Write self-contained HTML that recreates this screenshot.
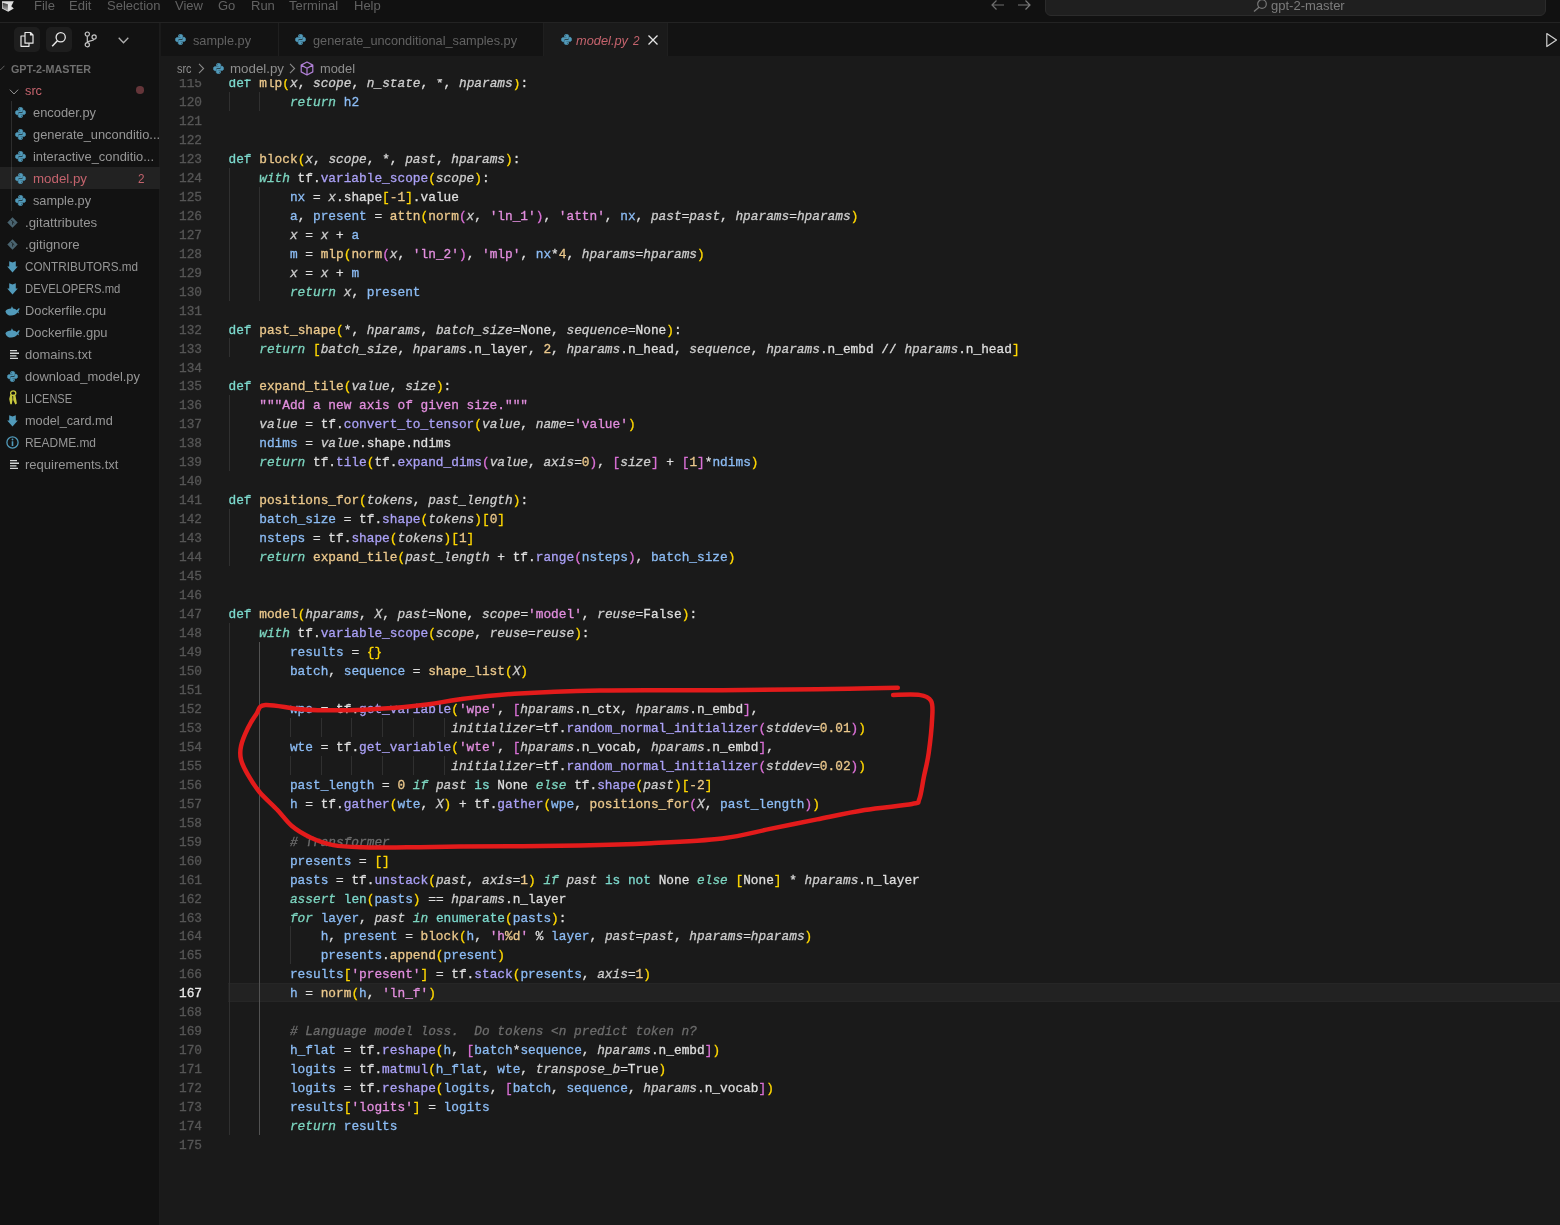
<!DOCTYPE html>
<html><head><meta charset="utf-8">
<style>
*{margin:0;padding:0;box-sizing:border-box}
html,body{width:1560px;height:1225px;overflow:hidden;background:#1a1a1a;font-family:"Liberation Sans",sans-serif}
.abs{position:absolute}
#title{position:absolute;left:0;top:0;width:1560px;height:23px;background:#111111;border-bottom:1px solid #232323}
.menu{position:absolute;top:-2.5px;font-size:13px;color:#626262;white-space:nowrap}
#search{position:absolute;left:1045px;top:-8px;width:501px;height:24px;background:#1f1f1f;border:1px solid #2b2b2b;border-radius:6px}
#side{position:absolute;left:0;top:23px;width:160px;height:1202px;background:#121212;border-right:1px solid #1c1c1c}
.row{position:absolute;left:0;width:159px;height:22px;font-size:13px;color:#a8a8a8;white-space:nowrap}
.row span.t{position:absolute;top:3px}
.row svg{position:absolute}
#tabs{position:absolute;left:161px;top:23px;width:1399px;height:33px;background:#131313}
.tab{position:absolute;top:0;height:33px;background:#131313;border-right:1px solid #1e1e1e;font-size:13px;color:#7a7a7a;white-space:nowrap}
.tab span{position:absolute;top:9px}
#crumbs{position:absolute;left:161px;top:56px;width:1399px;height:23px;background:#1a1a1a;font-size:13px;color:#9a9a9a;white-space:nowrap;z-index:5}
#editor{position:absolute;left:161px;top:56px;width:1399px;height:1169px;background:#1a1a1a;overflow:hidden}
.ln{position:absolute;left:0;width:202px;text-align:right;font-family:"Liberation Mono",monospace;font-size:12.8px;line-height:19px;height:19px;color:#565656;-webkit-text-stroke:0.3px currentColor}
.ln.cur{color:#e8e8e8;-webkit-text-stroke:0.3px currentColor}
.cl{position:absolute;left:228.5px;font-family:"Liberation Mono",monospace;font-size:12.8px;line-height:19px;height:19px;color:#dedede;white-space:pre;-webkit-text-stroke:0.3px currentColor}
.cl i{font-style:normal}
.cl i.ki,.cl i.p,.cl i.c{font-style:italic}
.cl i.k{color:#7cd8cc}
.cl i.ki{color:#7cd4bf}
.cl i.f{color:#ebc88c}
.cl i.m{color:#aaa0f5}
.cl i.v{color:#8cbcf4}
.cl i.s{color:#e28ede}
.cl i.n{color:#ebc88c}
.cl i.p{color:#cdcdcd}
.cl i.c{color:#6c6c6c}
.cl i.b1{color:#ffd700}
.cl i.b2{color:#da70d6}
.cl i.b3{color:#179fff}
.g{position:absolute;width:1px;height:19px;background:#303030}
.g.ga{background:#525252}
#curline{position:absolute;left:228px;width:1332px;height:19px;background:#222222;border-top:1px solid #262626;border-bottom:1px solid #262626}
#code{position:absolute;left:0;top:0;width:1560px;height:1225px}
</style></head><body><div id="wrap" style="position:absolute;left:0;top:0;width:1560px;height:1225px;overflow:hidden;will-change:transform">
<div id="code">
<div id="curline" style="top:983.36px"></div>
<div class="g" style="top:91.90px;left:228.50px"></div>
<div class="g" style="top:91.90px;left:259.22px"></div>
<div class="g" style="top:167.76px;left:228.50px"></div>
<div class="g" style="top:186.72px;left:228.50px"></div>
<div class="g" style="top:186.72px;left:259.22px"></div>
<div class="g" style="top:205.69px;left:228.50px"></div>
<div class="g" style="top:205.69px;left:259.22px"></div>
<div class="g" style="top:224.66px;left:228.50px"></div>
<div class="g" style="top:224.66px;left:259.22px"></div>
<div class="g" style="top:243.62px;left:228.50px"></div>
<div class="g" style="top:243.62px;left:259.22px"></div>
<div class="g" style="top:262.58px;left:228.50px"></div>
<div class="g" style="top:262.58px;left:259.22px"></div>
<div class="g" style="top:281.55px;left:228.50px"></div>
<div class="g" style="top:281.55px;left:259.22px"></div>
<div class="g" style="top:338.44px;left:228.50px"></div>
<div class="g" style="top:395.34px;left:228.50px"></div>
<div class="g" style="top:414.30px;left:228.50px"></div>
<div class="g" style="top:433.27px;left:228.50px"></div>
<div class="g" style="top:452.23px;left:228.50px"></div>
<div class="g" style="top:509.13px;left:228.50px"></div>
<div class="g" style="top:528.09px;left:228.50px"></div>
<div class="g" style="top:547.06px;left:228.50px"></div>
<div class="g" style="top:622.92px;left:228.50px"></div>
<div class="g" style="top:641.88px;left:228.50px"></div>
<div class="g ga" style="top:641.88px;left:259.22px"></div>
<div class="g" style="top:660.85px;left:228.50px"></div>
<div class="g ga" style="top:660.85px;left:259.22px"></div>
<div class="g" style="top:679.81px;left:228.50px"></div>
<div class="g ga" style="top:679.81px;left:259.22px"></div>
<div class="g" style="top:698.78px;left:228.50px"></div>
<div class="g ga" style="top:698.78px;left:259.22px"></div>
<div class="g" style="top:717.75px;left:228.50px"></div>
<div class="g ga" style="top:717.75px;left:259.22px"></div>
<div class="g" style="top:717.75px;left:289.94px"></div>
<div class="g" style="top:717.75px;left:320.66px"></div>
<div class="g" style="top:717.75px;left:351.38px"></div>
<div class="g" style="top:717.75px;left:382.10px"></div>
<div class="g" style="top:717.75px;left:412.82px"></div>
<div class="g" style="top:717.75px;left:443.54px"></div>
<div class="g" style="top:736.71px;left:228.50px"></div>
<div class="g ga" style="top:736.71px;left:259.22px"></div>
<div class="g" style="top:755.67px;left:228.50px"></div>
<div class="g ga" style="top:755.67px;left:259.22px"></div>
<div class="g" style="top:755.67px;left:289.94px"></div>
<div class="g" style="top:755.67px;left:320.66px"></div>
<div class="g" style="top:755.67px;left:351.38px"></div>
<div class="g" style="top:755.67px;left:382.10px"></div>
<div class="g" style="top:755.67px;left:412.82px"></div>
<div class="g" style="top:755.67px;left:443.54px"></div>
<div class="g" style="top:774.64px;left:228.50px"></div>
<div class="g ga" style="top:774.64px;left:259.22px"></div>
<div class="g" style="top:793.61px;left:228.50px"></div>
<div class="g ga" style="top:793.61px;left:259.22px"></div>
<div class="g" style="top:812.57px;left:228.50px"></div>
<div class="g ga" style="top:812.57px;left:259.22px"></div>
<div class="g" style="top:831.53px;left:228.50px"></div>
<div class="g ga" style="top:831.53px;left:259.22px"></div>
<div class="g" style="top:850.50px;left:228.50px"></div>
<div class="g ga" style="top:850.50px;left:259.22px"></div>
<div class="g" style="top:869.46px;left:228.50px"></div>
<div class="g ga" style="top:869.46px;left:259.22px"></div>
<div class="g" style="top:888.43px;left:228.50px"></div>
<div class="g ga" style="top:888.43px;left:259.22px"></div>
<div class="g" style="top:907.39px;left:228.50px"></div>
<div class="g ga" style="top:907.39px;left:259.22px"></div>
<div class="g" style="top:926.36px;left:228.50px"></div>
<div class="g ga" style="top:926.36px;left:259.22px"></div>
<div class="g" style="top:926.36px;left:289.94px"></div>
<div class="g" style="top:945.32px;left:228.50px"></div>
<div class="g ga" style="top:945.32px;left:259.22px"></div>
<div class="g" style="top:945.32px;left:289.94px"></div>
<div class="g" style="top:964.29px;left:228.50px"></div>
<div class="g ga" style="top:964.29px;left:259.22px"></div>
<div class="g" style="top:983.25px;left:228.50px"></div>
<div class="g ga" style="top:983.25px;left:259.22px"></div>
<div class="g" style="top:1002.22px;left:228.50px"></div>
<div class="g ga" style="top:1002.22px;left:259.22px"></div>
<div class="g" style="top:1021.18px;left:228.50px"></div>
<div class="g ga" style="top:1021.18px;left:259.22px"></div>
<div class="g" style="top:1040.15px;left:228.50px"></div>
<div class="g ga" style="top:1040.15px;left:259.22px"></div>
<div class="g" style="top:1059.12px;left:228.50px"></div>
<div class="g ga" style="top:1059.12px;left:259.22px"></div>
<div class="g" style="top:1078.08px;left:228.50px"></div>
<div class="g ga" style="top:1078.08px;left:259.22px"></div>
<div class="g" style="top:1097.05px;left:228.50px"></div>
<div class="g ga" style="top:1097.05px;left:259.22px"></div>
<div class="g" style="top:1116.01px;left:228.50px"></div>
<div class="g ga" style="top:1116.01px;left:259.22px"></div>
<div class="ln" style="top:74.03px">115</div>
<div class="ln" style="top:93.00px">120</div>
<div class="ln" style="top:111.97px">121</div>
<div class="ln" style="top:130.93px">122</div>
<div class="ln" style="top:149.89px">123</div>
<div class="ln" style="top:168.86px">124</div>
<div class="ln" style="top:187.82px">125</div>
<div class="ln" style="top:206.79px">126</div>
<div class="ln" style="top:225.75px">127</div>
<div class="ln" style="top:244.72px">128</div>
<div class="ln" style="top:263.69px">129</div>
<div class="ln" style="top:282.65px">130</div>
<div class="ln" style="top:301.62px">131</div>
<div class="ln" style="top:320.58px">132</div>
<div class="ln" style="top:339.54px">133</div>
<div class="ln" style="top:358.51px">134</div>
<div class="ln" style="top:377.48px">135</div>
<div class="ln" style="top:396.44px">136</div>
<div class="ln" style="top:415.40px">137</div>
<div class="ln" style="top:434.37px">138</div>
<div class="ln" style="top:453.33px">139</div>
<div class="ln" style="top:472.30px">140</div>
<div class="ln" style="top:491.26px">141</div>
<div class="ln" style="top:510.23px">142</div>
<div class="ln" style="top:529.19px">143</div>
<div class="ln" style="top:548.16px">144</div>
<div class="ln" style="top:567.12px">145</div>
<div class="ln" style="top:586.09px">146</div>
<div class="ln" style="top:605.05px">147</div>
<div class="ln" style="top:624.02px">148</div>
<div class="ln" style="top:642.99px">149</div>
<div class="ln" style="top:661.95px">150</div>
<div class="ln" style="top:680.91px">151</div>
<div class="ln" style="top:699.88px">152</div>
<div class="ln" style="top:718.85px">153</div>
<div class="ln" style="top:737.81px">154</div>
<div class="ln" style="top:756.77px">155</div>
<div class="ln" style="top:775.74px">156</div>
<div class="ln" style="top:794.71px">157</div>
<div class="ln" style="top:813.67px">158</div>
<div class="ln" style="top:832.63px">159</div>
<div class="ln" style="top:851.60px">160</div>
<div class="ln" style="top:870.56px">161</div>
<div class="ln" style="top:889.53px">162</div>
<div class="ln" style="top:908.50px">163</div>
<div class="ln" style="top:927.46px">164</div>
<div class="ln" style="top:946.42px">165</div>
<div class="ln" style="top:965.39px">166</div>
<div class="ln cur" style="top:984.36px">167</div>
<div class="ln" style="top:1003.32px">168</div>
<div class="ln" style="top:1022.28px">169</div>
<div class="ln" style="top:1041.25px">170</div>
<div class="ln" style="top:1060.22px">171</div>
<div class="ln" style="top:1079.18px">172</div>
<div class="ln" style="top:1098.14px">173</div>
<div class="ln" style="top:1117.11px">174</div>
<div class="ln" style="top:1136.08px">175</div>
<div class="cl" style="top:74.03px"><i class="k">def</i> <i class="f">mlp</i><i class="b1">(</i><i class="p">x</i>, <i class="p">scope</i>, <i class="p">n_state</i>, *, <i class="p">hparams</i><i class="b1">)</i>:</div>
<div class="cl" style="top:93.00px">        <i class="ki">return</i> <i class="v">h2</i></div>
<div class="cl" style="top:111.97px"></div>
<div class="cl" style="top:130.93px"></div>
<div class="cl" style="top:149.89px"><i class="k">def</i> <i class="f">block</i><i class="b1">(</i><i class="p">x</i>, <i class="p">scope</i>, *, <i class="p">past</i>, <i class="p">hparams</i><i class="b1">)</i>:</div>
<div class="cl" style="top:168.86px">    <i class="ki">with</i> tf.<i class="m">variable_scope</i><i class="b1">(</i><i class="p">scope</i><i class="b1">)</i>:</div>
<div class="cl" style="top:187.82px">        <i class="v">nx</i> = <i class="p">x</i>.shape<i class="b1">[</i><i class="n">-1</i><i class="b1">]</i>.value</div>
<div class="cl" style="top:206.79px">        <i class="v">a</i>, <i class="v">present</i> = <i class="f">attn</i><i class="b1">(</i><i class="f">norm</i><i class="b2">(</i><i class="p">x</i>, <i class="s">&#x27;ln_1&#x27;</i><i class="b2">)</i>, <i class="s">&#x27;attn&#x27;</i>, <i class="v">nx</i>, <i class="p">past</i>=<i class="p">past</i>, <i class="p">hparams</i>=<i class="p">hparams</i><i class="b1">)</i></div>
<div class="cl" style="top:225.75px">        <i class="p">x</i> = <i class="p">x</i> + <i class="v">a</i></div>
<div class="cl" style="top:244.72px">        <i class="v">m</i> = <i class="f">mlp</i><i class="b1">(</i><i class="f">norm</i><i class="b2">(</i><i class="p">x</i>, <i class="s">&#x27;ln_2&#x27;</i><i class="b2">)</i>, <i class="s">&#x27;mlp&#x27;</i>, <i class="v">nx</i>*<i class="n">4</i>, <i class="p">hparams</i>=<i class="p">hparams</i><i class="b1">)</i></div>
<div class="cl" style="top:263.69px">        <i class="p">x</i> = <i class="p">x</i> + <i class="v">m</i></div>
<div class="cl" style="top:282.65px">        <i class="ki">return</i> <i class="p">x</i>, <i class="v">present</i></div>
<div class="cl" style="top:301.62px"></div>
<div class="cl" style="top:320.58px"><i class="k">def</i> <i class="f">past_shape</i><i class="b1">(</i>*, <i class="p">hparams</i>, <i class="p">batch_size</i>=None, <i class="p">sequence</i>=None<i class="b1">)</i>:</div>
<div class="cl" style="top:339.54px">    <i class="ki">return</i> <i class="b1">[</i><i class="p">batch_size</i>, <i class="p">hparams</i>.n_layer, <i class="n">2</i>, <i class="p">hparams</i>.n_head, <i class="p">sequence</i>, <i class="p">hparams</i>.n_embd // <i class="p">hparams</i>.n_head<i class="b1">]</i></div>
<div class="cl" style="top:358.51px"></div>
<div class="cl" style="top:377.48px"><i class="k">def</i> <i class="f">expand_tile</i><i class="b1">(</i><i class="p">value</i>, <i class="p">size</i><i class="b1">)</i>:</div>
<div class="cl" style="top:396.44px">    <i class="s">&quot;&quot;&quot;Add a new axis of given size.&quot;&quot;&quot;</i></div>
<div class="cl" style="top:415.40px">    <i class="p">value</i> = tf.<i class="m">convert_to_tensor</i><i class="b1">(</i><i class="p">value</i>, <i class="p">name</i>=<i class="s">&#x27;value&#x27;</i><i class="b1">)</i></div>
<div class="cl" style="top:434.37px">    <i class="v">ndims</i> = <i class="p">value</i>.shape.ndims</div>
<div class="cl" style="top:453.33px">    <i class="ki">return</i> tf.<i class="m">tile</i><i class="b1">(</i>tf.<i class="m">expand_dims</i><i class="b2">(</i><i class="p">value</i>, <i class="p">axis</i>=<i class="n">0</i><i class="b2">)</i>, <i class="b2">[</i><i class="p">size</i><i class="b2">]</i> + <i class="b2">[</i><i class="n">1</i><i class="b2">]</i>*<i class="v">ndims</i><i class="b1">)</i></div>
<div class="cl" style="top:472.30px"></div>
<div class="cl" style="top:491.26px"><i class="k">def</i> <i class="f">positions_for</i><i class="b1">(</i><i class="p">tokens</i>, <i class="p">past_length</i><i class="b1">)</i>:</div>
<div class="cl" style="top:510.23px">    <i class="v">batch_size</i> = tf.<i class="m">shape</i><i class="b1">(</i><i class="p">tokens</i><i class="b1">)</i><i class="b1">[</i><i class="n">0</i><i class="b1">]</i></div>
<div class="cl" style="top:529.19px">    <i class="v">nsteps</i> = tf.<i class="m">shape</i><i class="b1">(</i><i class="p">tokens</i><i class="b1">)</i><i class="b1">[</i><i class="n">1</i><i class="b1">]</i></div>
<div class="cl" style="top:548.16px">    <i class="ki">return</i> <i class="f">expand_tile</i><i class="b1">(</i><i class="p">past_length</i> + tf.<i class="m">range</i><i class="b2">(</i><i class="v">nsteps</i><i class="b2">)</i>, <i class="v">batch_size</i><i class="b1">)</i></div>
<div class="cl" style="top:567.12px"></div>
<div class="cl" style="top:586.09px"></div>
<div class="cl" style="top:605.05px"><i class="k">def</i> <i class="f">model</i><i class="b1">(</i><i class="p">hparams</i>, <i class="p">X</i>, <i class="p">past</i>=None, <i class="p">scope</i>=<i class="s">&#x27;model&#x27;</i>, <i class="p">reuse</i>=False<i class="b1">)</i>:</div>
<div class="cl" style="top:624.02px">    <i class="ki">with</i> tf.<i class="m">variable_scope</i><i class="b1">(</i><i class="p">scope</i>, <i class="p">reuse</i>=<i class="p">reuse</i><i class="b1">)</i>:</div>
<div class="cl" style="top:642.99px">        <i class="v">results</i> = <i class="b1">{}</i></div>
<div class="cl" style="top:661.95px">        <i class="v">batch</i>, <i class="v">sequence</i> = <i class="f">shape_list</i><i class="b1">(</i><i class="p">X</i><i class="b1">)</i></div>
<div class="cl" style="top:680.91px"></div>
<div class="cl" style="top:699.88px">        <i class="v">wpe</i> = tf.<i class="m">get_variable</i><i class="b1">(</i><i class="s">&#x27;wpe&#x27;</i>, <i class="b2">[</i><i class="p">hparams</i>.n_ctx, <i class="p">hparams</i>.n_embd<i class="b2">]</i>,</div>
<div class="cl" style="top:718.85px">                             <i class="p">initializer</i>=tf.<i class="m">random_normal_initializer</i><i class="b2">(</i><i class="p">stddev</i>=<i class="n">0.01</i><i class="b2">)</i><i class="b1">)</i></div>
<div class="cl" style="top:737.81px">        <i class="v">wte</i> = tf.<i class="m">get_variable</i><i class="b1">(</i><i class="s">&#x27;wte&#x27;</i>, <i class="b2">[</i><i class="p">hparams</i>.n_vocab, <i class="p">hparams</i>.n_embd<i class="b2">]</i>,</div>
<div class="cl" style="top:756.77px">                             <i class="p">initializer</i>=tf.<i class="m">random_normal_initializer</i><i class="b2">(</i><i class="p">stddev</i>=<i class="n">0.02</i><i class="b2">)</i><i class="b1">)</i></div>
<div class="cl" style="top:775.74px">        <i class="v">past_length</i> = <i class="n">0</i> <i class="ki">if</i> <i class="p">past</i> <i class="k">is</i> None <i class="ki">else</i> tf.<i class="m">shape</i><i class="b1">(</i><i class="p">past</i><i class="b1">)</i><i class="b1">[</i><i class="n">-2</i><i class="b1">]</i></div>
<div class="cl" style="top:794.71px">        <i class="v">h</i> = tf.<i class="m">gather</i><i class="b1">(</i><i class="v">wte</i>, <i class="p">X</i><i class="b1">)</i> + tf.<i class="m">gather</i><i class="b1">(</i><i class="v">wpe</i>, <i class="f">positions_for</i><i class="b2">(</i><i class="p">X</i>, <i class="v">past_length</i><i class="b2">)</i><i class="b1">)</i></div>
<div class="cl" style="top:813.67px"></div>
<div class="cl" style="top:832.63px">        <i class="c"># Transformer</i></div>
<div class="cl" style="top:851.60px">        <i class="v">presents</i> = <i class="b1">[]</i></div>
<div class="cl" style="top:870.56px">        <i class="v">pasts</i> = tf.<i class="m">unstack</i><i class="b1">(</i><i class="p">past</i>, <i class="p">axis</i>=<i class="n">1</i><i class="b1">)</i> <i class="ki">if</i> <i class="p">past</i> <i class="k">is</i> <i class="k">not</i> None <i class="ki">else</i> <i class="b1">[</i>None<i class="b1">]</i> * <i class="p">hparams</i>.n_layer</div>
<div class="cl" style="top:889.53px">        <i class="ki">assert</i> <i class="k">len</i><i class="b1">(</i><i class="v">pasts</i><i class="b1">)</i> == <i class="p">hparams</i>.n_layer</div>
<div class="cl" style="top:908.50px">        <i class="ki">for</i> <i class="v">layer</i>, <i class="p">past</i> <i class="ki">in</i> <i class="k">enumerate</i><i class="b1">(</i><i class="v">pasts</i><i class="b1">)</i>:</div>
<div class="cl" style="top:927.46px">            <i class="v">h</i>, <i class="v">present</i> = <i class="f">block</i><i class="b1">(</i><i class="v">h</i>, <i class="s">&#x27;h</i><i class="n">%d</i><i class="s">&#x27;</i> % <i class="v">layer</i>, <i class="p">past</i>=<i class="p">past</i>, <i class="p">hparams</i>=<i class="p">hparams</i><i class="b1">)</i></div>
<div class="cl" style="top:946.42px">            <i class="v">presents</i>.<i class="f">append</i><i class="b1">(</i><i class="v">present</i><i class="b1">)</i></div>
<div class="cl" style="top:965.39px">        <i class="v">results</i><i class="b1">[</i><i class="s">&#x27;present&#x27;</i><i class="b1">]</i> = tf.<i class="m">stack</i><i class="b1">(</i><i class="v">presents</i>, <i class="p">axis</i>=<i class="n">1</i><i class="b1">)</i></div>
<div class="cl" style="top:984.36px">        <i class="v">h</i> = <i class="f">norm</i><i class="b1">(</i><i class="v">h</i>, <i class="s">&#x27;ln_f&#x27;</i><i class="b1">)</i></div>
<div class="cl" style="top:1003.32px"></div>
<div class="cl" style="top:1022.28px">        <i class="c"># Language model loss.  Do tokens &lt;n predict token n?</i></div>
<div class="cl" style="top:1041.25px">        <i class="v">h_flat</i> = tf.<i class="m">reshape</i><i class="b1">(</i><i class="v">h</i>, <i class="b2">[</i><i class="v">batch</i>*<i class="v">sequence</i>, <i class="p">hparams</i>.n_embd<i class="b2">]</i><i class="b1">)</i></div>
<div class="cl" style="top:1060.22px">        <i class="v">logits</i> = tf.<i class="m">matmul</i><i class="b1">(</i><i class="v">h_flat</i>, <i class="v">wte</i>, <i class="p">transpose_b</i>=True<i class="b1">)</i></div>
<div class="cl" style="top:1079.18px">        <i class="v">logits</i> = tf.<i class="m">reshape</i><i class="b1">(</i><i class="v">logits</i>, <i class="b2">[</i><i class="v">batch</i>, <i class="v">sequence</i>, <i class="p">hparams</i>.n_vocab<i class="b2">]</i><i class="b1">)</i></div>
<div class="cl" style="top:1098.14px">        <i class="v">results</i><i class="b1">[</i><i class="s">&#x27;logits&#x27;</i><i class="b1">]</i> = <i class="v">logits</i></div>
<div class="cl" style="top:1117.11px">        <i class="ki">return</i> <i class="v">results</i></div>
<div class="cl" style="top:1136.08px"></div>
</div>

<div id="title">
  <svg class="abs" style="left:0;top:0" width="16" height="14" viewBox="0 0 16 14"><defs><linearGradient id="lg" x1="0" y1="0" x2="0" y2="1"><stop offset="0" stop-color="#3a3a3a"/><stop offset="1" stop-color="#b0b0b0"/></linearGradient></defs><path d="M2 1.3L13.8 1.2L11.3 6.2L13.8 8.4L8.2 11.8L2 8.4Z" fill="#dcdcdc"/><path d="M2.6 2.8L7.9 4.3V10.8L2.6 8Z" fill="url(#lg)"/><path d="M8 4L10.8 3.2L10.8 9.5L8 10.8Z" fill="#e6e6e6"/></svg>
  <span class="menu" style="left:34px">File</span>
  <span class="menu" style="left:69px">Edit</span>
  <span class="menu" style="left:107px">Selection</span>
  <span class="menu" style="left:175px">View</span>
  <span class="menu" style="left:218px">Go</span>
  <span class="menu" style="left:251px">Run</span>
  <span class="menu" style="left:289px">Terminal</span>
  <span class="menu" style="left:354px">Help</span>
  <svg class="abs" style="left:990px;top:0" width="44" height="12" viewBox="0 0 44 12"><path d="M14 5H2M6.5 0.5L2 5L6.5 9.5" stroke="#6e6e6e" stroke-width="1.2" fill="none"/><path d="M28 5H40M35.5 0.5L40 5L35.5 9.5" stroke="#7a7a7a" stroke-width="1.2" fill="none"/></svg>
  <div id="search"></div>
  <svg class="abs" style="left:1252px;top:0" width="16" height="12" viewBox="0 0 16 12"><circle cx="10" cy="4" r="4.3" stroke="#777" stroke-width="1.2" fill="none"/><path d="M7 7.2L2 11.5" stroke="#777" stroke-width="1.3"/></svg>
  <span class="menu" style="left:1271px;color:#7c7c7c">gpt-2-master</span>
</div>

<div id="side"></div>
<div style="position:absolute;left:0;top:0">
<div style="position:absolute;left:14px;top:27px;width:26px;height:25px;border-radius:5px;background:#1e1e1e"></div>
<div style="position:absolute;left:46px;top:27px;width:26px;height:25px;border-radius:5px;background:#1e1e1e"></div>
<svg style="position:absolute;left:19px;top:31px" width="16" height="17" viewBox="0 0 16 17"><path stroke="#e8e8e8" stroke-width="1.2" fill="none" stroke-linejoin="round" d="M6 1.5H11.5L14 4V12.2H6ZM11.5 1.5V4H14"/><path stroke="#e8e8e8" stroke-width="1.2" fill="none" stroke-linejoin="round" d="M6 5H2V15.3H10V12.2"/></svg>
<svg style="position:absolute;left:51px;top:31px" width="16" height="17" viewBox="0 0 16 17"><circle cx="9.7" cy="6.3" r="4.6" stroke="#e8e8e8" stroke-width="1.3" fill="none"/><path stroke="#e8e8e8" stroke-width="1.5" d="M6.4 9.7L1.2 15.2"/></svg>
<svg style="position:absolute;left:83px;top:31px" width="16" height="17" viewBox="0 0 16 17"><circle cx="4.3" cy="3.1" r="2.1" stroke="#c4c4c4" stroke-width="1.2" fill="none"/><circle cx="4.3" cy="13.7" r="2.1" stroke="#c4c4c4" stroke-width="1.2" fill="none"/><circle cx="11.1" cy="5.9" r="2.1" stroke="#c4c4c4" stroke-width="1.2" fill="none"/><path stroke="#c4c4c4" stroke-width="1.2" fill="none" d="M4.3 5.2V11.6M11.1 8C11.1 10.2 5 9.6 4.3 11.4"/></svg>
<svg style="position:absolute;left:117.5px;top:37.0px" width="11" height="7" viewBox="0 0 11 7"><path stroke="#b0b0b0" stroke-width="1.3" fill="none" d="M0.7 0.8L5.5 5.8L10.3 0.8"/></svg>
<svg style="position:absolute;left:-4.0px;top:64.5px" width="9" height="6" viewBox="0 0 11 7"><path stroke="#6a6a6a" stroke-width="1.1" fill="none" d="M0.7 0.8L5.5 5.8L10.3 0.8"/></svg>
<span style="position:absolute;left:11.00px;top:64.06px;font-size:10.80px;line-height:10.80px;color:#707070;white-space:nowrap;transform-origin:0 0;transform:scaleX(0.9950);font-weight:bold;">GPT-2-MASTER</span>
<svg style="position:absolute;left:8.5px;top:88.5px" width="10" height="6" viewBox="0 0 11 7"><path stroke="#a0a0a0" stroke-width="1.1" fill="none" d="M0.7 0.8L5.5 5.8L10.3 0.8"/></svg>
<span style="position:absolute;left:24.50px;top:83.50px;font-size:13.00px;line-height:13.00px;color:#c4636d;white-space:nowrap;transform-origin:0 0;transform:scaleX(0.9810);">src</span>
<div style="position:absolute;left:136px;top:86px;width:7.5px;height:7.5px;border-radius:50%;background:#643539"></div>
<div style="position:absolute;left:10.5px;top:101px;width:1px;height:110px;background:#2d2d2d"></div>
<div style="position:absolute;left:0;top:167px;width:160px;height:22px;background:#222222"></div>
<div style="position:absolute;left:10.5px;top:167px;width:1px;height:22px;background:#3a3a3a"></div>
<svg style="position:absolute;left:15.0px;top:106.5px" width="11" height="11" viewBox="0 0 16 16"><path fill="#519aba" stroke="#519aba" stroke-width="0.7" d="M7.9 0.5C5.3 0.5 5.1 1.6 5.1 2.6V4.3H8.1V5H3.2C1.8 5 0.5 6 0.5 8.1C0.5 10.3 1.6 11.2 3 11.2H4.3V9.4C4.3 8.2 5.3 7.1 6.6 7.1H9.5C10.5 7.1 11.3 6.3 11.3 5.3V2.6C11.3 1.6 10.5 0.5 7.9 0.5ZM6.4 1.6A0.75 0.75 0 1 1 6.4 3.1A0.75 0.75 0 1 1 6.4 1.6Z"/><path fill="#519aba" stroke="#519aba" stroke-width="0.7" transform="rotate(180 8 8)" d="M7.9 0.5C5.3 0.5 5.1 1.6 5.1 2.6V4.3H8.1V5H3.2C1.8 5 0.5 6 0.5 8.1C0.5 10.3 1.6 11.2 3 11.2H4.3V9.4C4.3 8.2 5.3 7.1 6.6 7.1H9.5C10.5 7.1 11.3 6.3 11.3 5.3V2.6C11.3 1.6 10.5 0.5 7.9 0.5ZM6.4 1.6A0.75 0.75 0 1 1 6.4 3.1A0.75 0.75 0 1 1 6.4 1.6Z"/></svg>
<span style="position:absolute;left:32.50px;top:105.90px;font-size:13.00px;line-height:13.00px;color:#969696;white-space:nowrap;transform-origin:0 0;transform:scaleX(0.9905);">encoder.py</span>
<svg style="position:absolute;left:15.0px;top:128.5px" width="11" height="11" viewBox="0 0 16 16"><path fill="#519aba" stroke="#519aba" stroke-width="0.7" d="M7.9 0.5C5.3 0.5 5.1 1.6 5.1 2.6V4.3H8.1V5H3.2C1.8 5 0.5 6 0.5 8.1C0.5 10.3 1.6 11.2 3 11.2H4.3V9.4C4.3 8.2 5.3 7.1 6.6 7.1H9.5C10.5 7.1 11.3 6.3 11.3 5.3V2.6C11.3 1.6 10.5 0.5 7.9 0.5ZM6.4 1.6A0.75 0.75 0 1 1 6.4 3.1A0.75 0.75 0 1 1 6.4 1.6Z"/><path fill="#519aba" stroke="#519aba" stroke-width="0.7" transform="rotate(180 8 8)" d="M7.9 0.5C5.3 0.5 5.1 1.6 5.1 2.6V4.3H8.1V5H3.2C1.8 5 0.5 6 0.5 8.1C0.5 10.3 1.6 11.2 3 11.2H4.3V9.4C4.3 8.2 5.3 7.1 6.6 7.1H9.5C10.5 7.1 11.3 6.3 11.3 5.3V2.6C11.3 1.6 10.5 0.5 7.9 0.5ZM6.4 1.6A0.75 0.75 0 1 1 6.4 3.1A0.75 0.75 0 1 1 6.4 1.6Z"/></svg>
<span style="position:absolute;left:32.50px;top:127.90px;font-size:13.00px;line-height:13.00px;color:#969696;white-space:nowrap;transform-origin:0 0;transform:scaleX(0.9872);">generate_unconditio...</span>
<svg style="position:absolute;left:15.0px;top:150.5px" width="11" height="11" viewBox="0 0 16 16"><path fill="#519aba" stroke="#519aba" stroke-width="0.7" d="M7.9 0.5C5.3 0.5 5.1 1.6 5.1 2.6V4.3H8.1V5H3.2C1.8 5 0.5 6 0.5 8.1C0.5 10.3 1.6 11.2 3 11.2H4.3V9.4C4.3 8.2 5.3 7.1 6.6 7.1H9.5C10.5 7.1 11.3 6.3 11.3 5.3V2.6C11.3 1.6 10.5 0.5 7.9 0.5ZM6.4 1.6A0.75 0.75 0 1 1 6.4 3.1A0.75 0.75 0 1 1 6.4 1.6Z"/><path fill="#519aba" stroke="#519aba" stroke-width="0.7" transform="rotate(180 8 8)" d="M7.9 0.5C5.3 0.5 5.1 1.6 5.1 2.6V4.3H8.1V5H3.2C1.8 5 0.5 6 0.5 8.1C0.5 10.3 1.6 11.2 3 11.2H4.3V9.4C4.3 8.2 5.3 7.1 6.6 7.1H9.5C10.5 7.1 11.3 6.3 11.3 5.3V2.6C11.3 1.6 10.5 0.5 7.9 0.5ZM6.4 1.6A0.75 0.75 0 1 1 6.4 3.1A0.75 0.75 0 1 1 6.4 1.6Z"/></svg>
<span style="position:absolute;left:32.50px;top:149.90px;font-size:13.00px;line-height:13.00px;color:#969696;white-space:nowrap;transform-origin:0 0;transform:scaleX(0.9908);">interactive_conditio...</span>
<svg style="position:absolute;left:15.0px;top:172.5px" width="11" height="11" viewBox="0 0 16 16"><path fill="#519aba" stroke="#519aba" stroke-width="0.7" d="M7.9 0.5C5.3 0.5 5.1 1.6 5.1 2.6V4.3H8.1V5H3.2C1.8 5 0.5 6 0.5 8.1C0.5 10.3 1.6 11.2 3 11.2H4.3V9.4C4.3 8.2 5.3 7.1 6.6 7.1H9.5C10.5 7.1 11.3 6.3 11.3 5.3V2.6C11.3 1.6 10.5 0.5 7.9 0.5ZM6.4 1.6A0.75 0.75 0 1 1 6.4 3.1A0.75 0.75 0 1 1 6.4 1.6Z"/><path fill="#519aba" stroke="#519aba" stroke-width="0.7" transform="rotate(180 8 8)" d="M7.9 0.5C5.3 0.5 5.1 1.6 5.1 2.6V4.3H8.1V5H3.2C1.8 5 0.5 6 0.5 8.1C0.5 10.3 1.6 11.2 3 11.2H4.3V9.4C4.3 8.2 5.3 7.1 6.6 7.1H9.5C10.5 7.1 11.3 6.3 11.3 5.3V2.6C11.3 1.6 10.5 0.5 7.9 0.5ZM6.4 1.6A0.75 0.75 0 1 1 6.4 3.1A0.75 0.75 0 1 1 6.4 1.6Z"/></svg>
<span style="position:absolute;left:32.50px;top:171.90px;font-size:13.00px;line-height:13.00px;color:#c4636d;white-space:nowrap;transform-origin:0 0;transform:scaleX(1.0237);">model.py</span>
<span style="position:absolute;left:138.00px;top:171.90px;font-size:13.00px;line-height:13.00px;color:#c4636d;white-space:nowrap;transform-origin:0 0;transform:scaleX(0.8991);">2</span>
<svg style="position:absolute;left:15.0px;top:194.5px" width="11" height="11" viewBox="0 0 16 16"><path fill="#519aba" stroke="#519aba" stroke-width="0.7" d="M7.9 0.5C5.3 0.5 5.1 1.6 5.1 2.6V4.3H8.1V5H3.2C1.8 5 0.5 6 0.5 8.1C0.5 10.3 1.6 11.2 3 11.2H4.3V9.4C4.3 8.2 5.3 7.1 6.6 7.1H9.5C10.5 7.1 11.3 6.3 11.3 5.3V2.6C11.3 1.6 10.5 0.5 7.9 0.5ZM6.4 1.6A0.75 0.75 0 1 1 6.4 3.1A0.75 0.75 0 1 1 6.4 1.6Z"/><path fill="#519aba" stroke="#519aba" stroke-width="0.7" transform="rotate(180 8 8)" d="M7.9 0.5C5.3 0.5 5.1 1.6 5.1 2.6V4.3H8.1V5H3.2C1.8 5 0.5 6 0.5 8.1C0.5 10.3 1.6 11.2 3 11.2H4.3V9.4C4.3 8.2 5.3 7.1 6.6 7.1H9.5C10.5 7.1 11.3 6.3 11.3 5.3V2.6C11.3 1.6 10.5 0.5 7.9 0.5ZM6.4 1.6A0.75 0.75 0 1 1 6.4 3.1A0.75 0.75 0 1 1 6.4 1.6Z"/></svg>
<span style="position:absolute;left:32.50px;top:193.90px;font-size:13.00px;line-height:13.00px;color:#969696;white-space:nowrap;transform-origin:0 0;transform:scaleX(0.9789);">sample.py</span>
<svg style="position:absolute;left:6.5px;top:216.5px" width="11" height="11" viewBox="0 0 11 11"><path fill="#4a6470" d="M5.5 0.3L10.7 5.5L5.5 10.7L0.3 5.5Z"/><path stroke="#1b2226" stroke-width="0.9" fill="none" d="M4 2.8L5.6 4.4V7.6M5.6 4.4L7.3 6"/></svg>
<span style="position:absolute;left:24.80px;top:215.90px;font-size:13.00px;line-height:13.00px;color:#969696;white-space:nowrap;transform-origin:0 0;transform:scaleX(1.0196);">.gitattributes</span>
<svg style="position:absolute;left:6.5px;top:238.5px" width="11" height="11" viewBox="0 0 11 11"><path fill="#4a6470" d="M5.5 0.3L10.7 5.5L5.5 10.7L0.3 5.5Z"/><path stroke="#1b2226" stroke-width="0.9" fill="none" d="M4 2.8L5.6 4.4V7.6M5.6 4.4L7.3 6"/></svg>
<span style="position:absolute;left:24.80px;top:237.90px;font-size:13.00px;line-height:13.00px;color:#969696;white-space:nowrap;transform-origin:0 0;transform:scaleX(1.0229);">.gitignore</span>
<svg style="position:absolute;left:7.0px;top:260.5px" width="11" height="12" viewBox="0 0 11 12"><path fill="#519aba" d="M2.2 0.3L5.5 1.6L8.8 0.3V5.6H10.8L5.5 11.4L0.2 5.6H2.2Z"/></svg>
<span style="position:absolute;left:24.80px;top:259.90px;font-size:13.00px;line-height:13.00px;color:#969696;white-space:nowrap;transform-origin:0 0;transform:scaleX(0.9009);">CONTRIBUTORS.md</span>
<svg style="position:absolute;left:7.0px;top:282.5px" width="11" height="12" viewBox="0 0 11 12"><path fill="#519aba" d="M2.2 0.3L5.5 1.6L8.8 0.3V5.6H10.8L5.5 11.4L0.2 5.6H2.2Z"/></svg>
<span style="position:absolute;left:24.80px;top:281.90px;font-size:13.00px;line-height:13.00px;color:#969696;white-space:nowrap;transform-origin:0 0;transform:scaleX(0.8678);">DEVELOPERS.md</span>
<svg style="position:absolute;left:5.0px;top:304.5px" width="15" height="11" viewBox="0 0 15 11"><path fill="#519aba" d="M0.4 6.2C1.5 4.6 3.5 3.6 6 3.5L6.9 1.3L8.1 3.6C9.6 3.8 10.8 4.4 11.6 5.2L13.6 3.3L14.8 3.6L13.4 6.5L14.2 8.6L12.4 7.6C11.2 9.6 8.8 10.6 6 10.6C3.2 10.6 1.1 9.3 0.4 6.2Z"/></svg>
<span style="position:absolute;left:24.80px;top:303.90px;font-size:13.00px;line-height:13.00px;color:#969696;white-space:nowrap;transform-origin:0 0;transform:scaleX(0.9858);">Dockerfile.cpu</span>
<svg style="position:absolute;left:5.0px;top:326.5px" width="15" height="11" viewBox="0 0 15 11"><path fill="#519aba" d="M0.4 6.2C1.5 4.6 3.5 3.6 6 3.5L6.9 1.3L8.1 3.6C9.6 3.8 10.8 4.4 11.6 5.2L13.6 3.3L14.8 3.6L13.4 6.5L14.2 8.6L12.4 7.6C11.2 9.6 8.8 10.6 6 10.6C3.2 10.6 1.1 9.3 0.4 6.2Z"/></svg>
<span style="position:absolute;left:24.80px;top:325.90px;font-size:13.00px;line-height:13.00px;color:#969696;white-space:nowrap;transform-origin:0 0;transform:scaleX(0.9928);">Dockerfile.gpu</span>
<svg style="position:absolute;left:8.5px;top:348.5px" width="11" height="11" viewBox="0 0 11 11"><path fill="#d4d7d6" d="M1 1H8V2.3H1ZM1 3.6H10V4.9H1ZM1 6.2H7.5V7.5H1ZM1 8.8H9V10.1H1Z"/></svg>
<span style="position:absolute;left:24.80px;top:347.90px;font-size:13.00px;line-height:13.00px;color:#969696;white-space:nowrap;transform-origin:0 0;transform:scaleX(1.0004);">domains.txt</span>
<svg style="position:absolute;left:6.5px;top:370.5px" width="11" height="11" viewBox="0 0 16 16"><path fill="#519aba" stroke="#519aba" stroke-width="0.7" d="M7.9 0.5C5.3 0.5 5.1 1.6 5.1 2.6V4.3H8.1V5H3.2C1.8 5 0.5 6 0.5 8.1C0.5 10.3 1.6 11.2 3 11.2H4.3V9.4C4.3 8.2 5.3 7.1 6.6 7.1H9.5C10.5 7.1 11.3 6.3 11.3 5.3V2.6C11.3 1.6 10.5 0.5 7.9 0.5ZM6.4 1.6A0.75 0.75 0 1 1 6.4 3.1A0.75 0.75 0 1 1 6.4 1.6Z"/><path fill="#519aba" stroke="#519aba" stroke-width="0.7" transform="rotate(180 8 8)" d="M7.9 0.5C5.3 0.5 5.1 1.6 5.1 2.6V4.3H8.1V5H3.2C1.8 5 0.5 6 0.5 8.1C0.5 10.3 1.6 11.2 3 11.2H4.3V9.4C4.3 8.2 5.3 7.1 6.6 7.1H9.5C10.5 7.1 11.3 6.3 11.3 5.3V2.6C11.3 1.6 10.5 0.5 7.9 0.5ZM6.4 1.6A0.75 0.75 0 1 1 6.4 3.1A0.75 0.75 0 1 1 6.4 1.6Z"/></svg>
<span style="position:absolute;left:24.80px;top:369.90px;font-size:13.00px;line-height:13.00px;color:#969696;white-space:nowrap;transform-origin:0 0;transform:scaleX(0.9945);">download_model.py</span>
<svg style="position:absolute;left:7.5px;top:389.5px" width="10" height="16" viewBox="0 0 10 16"><ellipse cx="5.2" cy="3.2" rx="2.6" ry="2.3" stroke="#c9c93e" stroke-width="1.3" fill="none"/><path fill="#c9c93e" d="M2 5.8C2 4.8 3 4.6 4 4.8L4.6 9.5L3.8 14.3H2.3L1.2 9Z"/><path fill="#c9c93e" d="M5.2 4.8C6.4 4.5 7.6 4.8 7.6 6L8.9 13.4L7.3 14.5L5.2 10Z"/></svg>
<span style="position:absolute;left:24.80px;top:391.90px;font-size:13.00px;line-height:13.00px;color:#969696;white-space:nowrap;transform-origin:0 0;transform:scaleX(0.8448);">LICENSE</span>
<svg style="position:absolute;left:7.0px;top:414.5px" width="11" height="12" viewBox="0 0 11 12"><path fill="#519aba" d="M2.2 0.3L5.5 1.6L8.8 0.3V5.6H10.8L5.5 11.4L0.2 5.6H2.2Z"/></svg>
<span style="position:absolute;left:24.80px;top:413.90px;font-size:13.00px;line-height:13.00px;color:#969696;white-space:nowrap;transform-origin:0 0;transform:scaleX(0.9789);">model_card.md</span>
<svg style="position:absolute;left:5.5px;top:435.5px" width="13" height="13" viewBox="0 0 13 13"><circle cx="6.5" cy="6.5" r="5.6" stroke="#519aba" stroke-width="1.3" fill="none"/><path fill="#519aba" d="M5.7 5.2H7.3V10H5.7ZM6.5 2.6A0.9 0.9 0 1 1 6.5 4.4A0.9 0.9 0 1 1 6.5 2.6Z"/></svg>
<span style="position:absolute;left:24.80px;top:435.90px;font-size:13.00px;line-height:13.00px;color:#969696;white-space:nowrap;transform-origin:0 0;transform:scaleX(0.9186);">README.md</span>
<svg style="position:absolute;left:8.5px;top:458.5px" width="11" height="11" viewBox="0 0 11 11"><path fill="#d4d7d6" d="M1 1H8V2.3H1ZM1 3.6H10V4.9H1ZM1 6.2H7.5V7.5H1ZM1 8.8H9V10.1H1Z"/></svg>
<span style="position:absolute;left:24.80px;top:457.90px;font-size:13.00px;line-height:13.00px;color:#969696;white-space:nowrap;transform-origin:0 0;transform:scaleX(1.0021);">requirements.txt</span>
</div>

<div id="tabs"></div>
<div style="position:absolute;left:161px;top:23px;width:118px;height:33px;background:#131313;border-right:1px solid #1f1f1f"></div>
<div style="position:absolute;left:280px;top:23px;width:264px;height:33px;background:#131313;border-right:1px solid #1f1f1f"></div>
<div style="position:absolute;left:544px;top:23px;width:124px;height:34px;background:#1a1a1a;border-right:1px solid #1f1f1f"></div>
<svg style="position:absolute;left:174.5px;top:33.8px" width="11" height="11" viewBox="0 0 16 16"><path fill="#519aba" stroke="#519aba" stroke-width="0.7" d="M7.9 0.5C5.3 0.5 5.1 1.6 5.1 2.6V4.3H8.1V5H3.2C1.8 5 0.5 6 0.5 8.1C0.5 10.3 1.6 11.2 3 11.2H4.3V9.4C4.3 8.2 5.3 7.1 6.6 7.1H9.5C10.5 7.1 11.3 6.3 11.3 5.3V2.6C11.3 1.6 10.5 0.5 7.9 0.5ZM6.4 1.6A0.75 0.75 0 1 1 6.4 3.1A0.75 0.75 0 1 1 6.4 1.6Z"/><path fill="#519aba" stroke="#519aba" stroke-width="0.7" transform="rotate(180 8 8)" d="M7.9 0.5C5.3 0.5 5.1 1.6 5.1 2.6V4.3H8.1V5H3.2C1.8 5 0.5 6 0.5 8.1C0.5 10.3 1.6 11.2 3 11.2H4.3V9.4C4.3 8.2 5.3 7.1 6.6 7.1H9.5C10.5 7.1 11.3 6.3 11.3 5.3V2.6C11.3 1.6 10.5 0.5 7.9 0.5ZM6.4 1.6A0.75 0.75 0 1 1 6.4 3.1A0.75 0.75 0 1 1 6.4 1.6Z"/></svg>
<span style="position:absolute;left:192.50px;top:34.00px;font-size:13.00px;line-height:13.00px;color:#626262;white-space:nowrap;transform-origin:0 0;transform:scaleX(0.9789);">sample.py</span>
<svg style="position:absolute;left:294.5px;top:33.8px" width="11" height="11" viewBox="0 0 16 16"><path fill="#519aba" stroke="#519aba" stroke-width="0.7" d="M7.9 0.5C5.3 0.5 5.1 1.6 5.1 2.6V4.3H8.1V5H3.2C1.8 5 0.5 6 0.5 8.1C0.5 10.3 1.6 11.2 3 11.2H4.3V9.4C4.3 8.2 5.3 7.1 6.6 7.1H9.5C10.5 7.1 11.3 6.3 11.3 5.3V2.6C11.3 1.6 10.5 0.5 7.9 0.5ZM6.4 1.6A0.75 0.75 0 1 1 6.4 3.1A0.75 0.75 0 1 1 6.4 1.6Z"/><path fill="#519aba" stroke="#519aba" stroke-width="0.7" transform="rotate(180 8 8)" d="M7.9 0.5C5.3 0.5 5.1 1.6 5.1 2.6V4.3H8.1V5H3.2C1.8 5 0.5 6 0.5 8.1C0.5 10.3 1.6 11.2 3 11.2H4.3V9.4C4.3 8.2 5.3 7.1 6.6 7.1H9.5C10.5 7.1 11.3 6.3 11.3 5.3V2.6C11.3 1.6 10.5 0.5 7.9 0.5ZM6.4 1.6A0.75 0.75 0 1 1 6.4 3.1A0.75 0.75 0 1 1 6.4 1.6Z"/></svg>
<span style="position:absolute;left:312.50px;top:34.00px;font-size:13.00px;line-height:13.00px;color:#626262;white-space:nowrap;transform-origin:0 0;transform:scaleX(0.9801);">generate_unconditional_samples.py</span>
<svg style="position:absolute;left:561.0px;top:33.8px" width="11" height="11" viewBox="0 0 16 16"><path fill="#519aba" stroke="#519aba" stroke-width="0.7" d="M7.9 0.5C5.3 0.5 5.1 1.6 5.1 2.6V4.3H8.1V5H3.2C1.8 5 0.5 6 0.5 8.1C0.5 10.3 1.6 11.2 3 11.2H4.3V9.4C4.3 8.2 5.3 7.1 6.6 7.1H9.5C10.5 7.1 11.3 6.3 11.3 5.3V2.6C11.3 1.6 10.5 0.5 7.9 0.5ZM6.4 1.6A0.75 0.75 0 1 1 6.4 3.1A0.75 0.75 0 1 1 6.4 1.6Z"/><path fill="#519aba" stroke="#519aba" stroke-width="0.7" transform="rotate(180 8 8)" d="M7.9 0.5C5.3 0.5 5.1 1.6 5.1 2.6V4.3H8.1V5H3.2C1.8 5 0.5 6 0.5 8.1C0.5 10.3 1.6 11.2 3 11.2H4.3V9.4C4.3 8.2 5.3 7.1 6.6 7.1H9.5C10.5 7.1 11.3 6.3 11.3 5.3V2.6C11.3 1.6 10.5 0.5 7.9 0.5ZM6.4 1.6A0.75 0.75 0 1 1 6.4 3.1A0.75 0.75 0 1 1 6.4 1.6Z"/></svg>
<span style="position:absolute;left:576.00px;top:34.00px;font-size:13.00px;line-height:13.00px;color:#c4636d;white-space:nowrap;transform-origin:0 0;transform:scaleX(0.9858);font-style:italic;">model.py</span>
<span style="position:absolute;left:633.00px;top:34.00px;font-size:13.00px;line-height:13.00px;color:#c4636d;white-space:nowrap;transform-origin:0 0;transform:scaleX(0.8991);font-style:italic;">2</span>
<svg style="position:absolute;left:647px;top:34px" width="12" height="12" viewBox="0 0 12 12"><path stroke="#e6e6e6" stroke-width="1.3" d="M1.5 1.5L10.5 10.5M10.5 1.5L1.5 10.5"/></svg>
<svg style="position:absolute;left:1545px;top:32px" width="13" height="16" viewBox="0 0 13 16"><path stroke="#d0d0d0" stroke-width="1.2" fill="none" stroke-linejoin="round" d="M1.8 1.5L11.5 8L1.8 14.5Z"/></svg>

<div id="crumbs"></div>
<div style="position:absolute;left:0;top:0;z-index:6">
<span style="position:absolute;left:176.80px;top:62.20px;font-size:13.00px;line-height:13.00px;color:#8e8e8e;white-space:nowrap;transform-origin:0 0;transform:scaleX(0.8368);">src</span>
<svg style="position:absolute;left:197.5px;top:62.8px" width="7" height="11" viewBox="0 0 7 11"><path stroke="#8a8a8a" stroke-width="1.1" fill="none" d="M1 0.8L5.6 5.5L1 10.2"/></svg>
<svg style="position:absolute;left:212.5px;top:62.5px" width="11" height="11" viewBox="0 0 16 16"><path fill="#519aba" stroke="#519aba" stroke-width="0.7" d="M7.9 0.5C5.3 0.5 5.1 1.6 5.1 2.6V4.3H8.1V5H3.2C1.8 5 0.5 6 0.5 8.1C0.5 10.3 1.6 11.2 3 11.2H4.3V9.4C4.3 8.2 5.3 7.1 6.6 7.1H9.5C10.5 7.1 11.3 6.3 11.3 5.3V2.6C11.3 1.6 10.5 0.5 7.9 0.5ZM6.4 1.6A0.75 0.75 0 1 1 6.4 3.1A0.75 0.75 0 1 1 6.4 1.6Z"/><path fill="#519aba" stroke="#519aba" stroke-width="0.7" transform="rotate(180 8 8)" d="M7.9 0.5C5.3 0.5 5.1 1.6 5.1 2.6V4.3H8.1V5H3.2C1.8 5 0.5 6 0.5 8.1C0.5 10.3 1.6 11.2 3 11.2H4.3V9.4C4.3 8.2 5.3 7.1 6.6 7.1H9.5C10.5 7.1 11.3 6.3 11.3 5.3V2.6C11.3 1.6 10.5 0.5 7.9 0.5ZM6.4 1.6A0.75 0.75 0 1 1 6.4 3.1A0.75 0.75 0 1 1 6.4 1.6Z"/></svg>
<span style="position:absolute;left:230.30px;top:62.20px;font-size:13.00px;line-height:13.00px;color:#8e8e8e;white-space:nowrap;transform-origin:0 0;transform:scaleX(1.0237);">model.py</span>
<svg style="position:absolute;left:288.5px;top:62.8px" width="7" height="11" viewBox="0 0 7 11"><path stroke="#8a8a8a" stroke-width="1.1" fill="none" d="M1 0.8L5.6 5.5L1 10.2"/></svg>
<svg style="position:absolute;left:300.0px;top:61.0px" width="14" height="15" viewBox="0 0 14 15"><path stroke="#b180d7" stroke-width="1.2" fill="none" stroke-linejoin="round" d="M7 1L12.8 4.1V10.9L7 14L1.2 10.9V4.1ZM1.2 4.1L7 7.3L12.8 4.1M7 7.3V14"/></svg>
<span style="position:absolute;left:319.50px;top:62.20px;font-size:13.00px;line-height:13.00px;color:#8e8e8e;white-space:nowrap;transform-origin:0 0;transform:scaleX(0.9885);">model</span>
</div>

<svg style="position:absolute;left:0;top:0;z-index:10" width="1560" height="1225" viewBox="0 0 1560 1225"><path d="M897.8 687.8 C891.5 687.9 873.5 688.3 860.0 688.5 C846.5 688.7 840.0 688.9 817.0 689.2 C794.0 689.5 758.2 690.0 722.0 690.2 C685.8 690.4 634.6 689.8 600.0 690.4 C565.4 691.0 537.9 692.2 514.6 693.7 C491.3 695.2 474.3 697.4 460.0 699.2 C445.7 701.0 440.3 702.8 429.0 704.3 C417.7 705.8 405.7 707.0 392.2 708.0 C378.7 709.0 362.6 710.0 347.9 710.2 C333.1 710.5 317.4 710.4 303.7 709.5 C289.9 708.6 273.3 704.4 265.4 705.1 C257.5 705.8 259.4 710.0 256.5 713.9 C253.6 717.8 250.3 723.2 247.7 728.6 C245.1 734.0 242.1 741.1 241.0 746.3 C239.9 751.5 239.9 754.9 241.0 759.6 C242.1 764.3 244.6 769.0 247.7 774.4 C250.8 779.8 254.6 786.1 259.5 792.0 C264.4 797.9 271.8 804.0 277.2 809.7 C282.6 815.4 286.3 821.3 291.9 826.0 C297.5 830.7 304.1 834.5 311.0 837.7 C317.9 840.9 324.6 843.5 333.2 845.1 C341.8 846.7 350.4 846.9 362.7 847.3 C375.0 847.7 390.7 847.4 406.9 847.3 C423.1 847.2 431.1 846.9 460.0 846.6 C488.9 846.3 548.2 846.1 580.0 845.5 C611.8 844.9 627.3 844.4 651.0 843.2 C674.7 842.0 702.2 840.8 722.0 838.4 C741.8 836.0 754.2 832.1 770.0 828.9 C785.8 825.7 801.2 822.5 817.0 819.4 C832.8 816.2 848.8 812.6 864.6 810.0 C880.4 807.4 902.9 805.8 912.0 804.0 C921.1 802.2 917.2 803.8 919.2 799.3 C921.2 794.8 922.3 784.4 923.9 776.7 C925.5 769.0 927.3 762.9 928.7 753.0 C930.1 743.1 931.8 726.1 932.2 717.4 C932.6 708.7 933.2 704.5 931.0 700.8 C928.8 697.0 925.5 695.9 919.2 694.9 C912.9 693.9 897.5 694.9 893.1 694.9" stroke="#e31b1b" stroke-width="4.5" fill="none" stroke-linecap="round" stroke-linejoin="round"/></svg>
</div></body></html>
